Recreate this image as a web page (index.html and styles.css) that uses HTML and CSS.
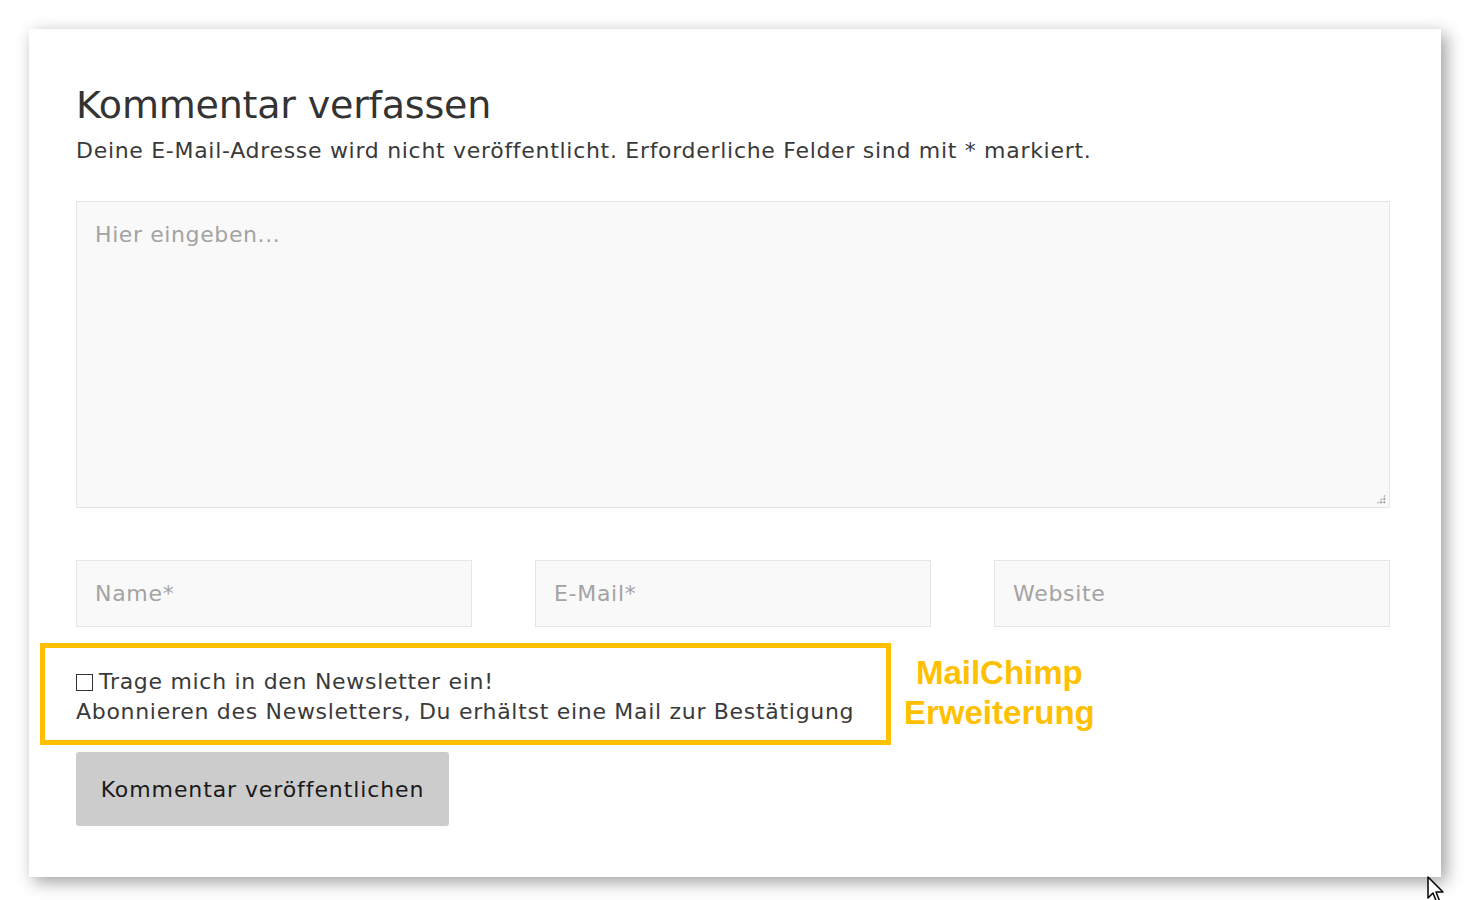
FILE: index.html
```html
<!doctype html>
<html>
<head>
    <title>Kommentar verfassen</title>

    <link rel="stylesheet" href="styles.css">
</head>
<body>
    <div class="card">
      <h3 class="reply-title">Kommentar verfassen</h3>
      <p class="notes">Deine E-Mail-Adresse wird nicht veröffentlicht. Erforderliche Felder sind mit * markiert.</p>

      <form class="comment-form">
        <div class="textarea-wrap">
          <textarea class="comment" placeholder="Hier eingeben..."></textarea>
        </div>

        <div class="fields">
          <input type="text" class="input" placeholder="Name*">
          <input type="email" class="input" placeholder="E-Mail*">
          <input type="url" class="input" placeholder="Website">
        </div>

        <div class="newsletter-row">
          <div class="newsletter">
            <label class="nl-label"><span class="box"></span>Trage mich in den Newsletter ein!</label>
            <p class="nl-text">Abonnieren des Newsletters, Du erhältst eine Mail zur Bestätigung</p>
          </div>
          <div class="note">MailChimp<br>Erweiterung</div>
        </div>

        <button type="submit" class="btn-submit">Kommentar veröffentlichen</button>
      </form>
    </div>

    <svg class="cursor" width="22" height="30" viewBox="0 0 22 30">
      <path d="M1 1 L1 22 L6 17 L10 27 L13 26 L9 16 L16 16 Z" fill="#fff" stroke="#000" stroke-width="1.5" stroke-linejoin="round"/>
    </svg>
</body>
</html>
```

FILE: styles.css
```css
* {
  margin: 0;
  padding: 0;
  box-sizing: border-box;
}
body {
  background-color: #fff;
  padding: 29px 29px 0 29px;
  font-family: "DejaVu Sans", sans-serif;
  color: #3a3a3a;
  overflow: hidden;
  height: 900px;
}
.card {
  width: 1412px;
  height: 848px;
  background-color: #fff;
  padding: 53px 51px 0 47px;
  box-shadow: 5px 5px 16px rgba(0, 0, 0, 0.38);
}
.reply-title {
  font-weight: 400;
  font-size: 38px;
  line-height: 46px;
  letter-spacing: -0.2px;
  color: #333;
}
.notes {
  font-size: 22px;
  line-height: 30px;
  letter-spacing: 0.7px;
  margin-top: 8px;
  color: #3a3a3a;
}
.textarea-wrap {
  position: relative;
  margin-top: 35px;
  width: 1314px;
}
.textarea-wrap::after {
  content: "";
  position: absolute;
  right: 4px;
  bottom: 4px;
  width: 10px;
  height: 10px;
  background: radial-gradient(circle, #999 1px, transparent 1.4px) 0 0 / 3.33px 3.33px;
  clip-path: polygon(100% 0, 100% 100%, 0 100%);
}
.comment {
  display: block;
  width: 1314px;
  height: 307px;
  background-color: #f9f9f9;
  border: 1px solid #e6e6e6;
  padding: 20px 18px;
  font-family: inherit;
  font-size: 22px;
  letter-spacing: 0.6px;
  resize: none;
  outline: none;
}
.comment::placeholder,
.input::placeholder {
  color: #a3a3a3;
}
.fields {
  display: flex;
  gap: 63px;
  margin-top: 52px;
  width: 1314px;
}
.input {
  width: 396px;
  height: 67px;
  background-color: #f9f9f9;
  border: 1px solid #e6e6e6;
  padding: 0 18px;
  font-family: inherit;
  font-size: 22px;
  letter-spacing: 0.7px;
  outline: none;
}
.newsletter-row {
  display: flex;
  align-items: flex-start;
  margin-top: 16px;
  margin-left: -36px;
}
.newsletter {
  width: 851px;
  height: 102px;
  border: 5px solid #ffc000;
  padding: 19px 0 0 31px;
  font-size: 22px;
  line-height: 30px;
  letter-spacing: 0.7px;
  color: #3a3a3a;
}
.nl-label {
  display: flex;
  align-items: center;
}
.box {
  display: inline-block;
  width: 17px;
  height: 17px;
  border: 1.5px solid #333;
  margin-right: 6px;
}
.note {
  margin-left: 13px;
  margin-top: 10px;
  font-family: "Liberation Sans", Arial, sans-serif;
  font-weight: 700;
  font-size: 33px;
  line-height: 40px;
  color: #ffc000;
  text-align: center;
}
.btn-submit {
  display: block;
  margin-top: 7px;
  width: 373px;
  height: 74px;
  background-color: #cccccc;
  border: none;
  border-radius: 3px;
  font-family: inherit;
  font-size: 22px;
  letter-spacing: 0.9px;
  color: #1a1a1a;
  cursor: pointer;
}
.cursor {
  position: absolute;
  left: 1427px;
  top: 876px;
}
```
